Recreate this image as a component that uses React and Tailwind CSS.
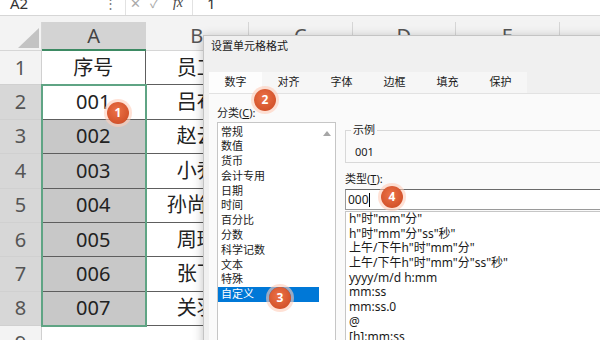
import React from "react";

const rows = [
  ["1", "序号", "员工", false, false],
  ["2", "001", "吕布", true, false],
  ["3", "002", "赵云", true, true],
  ["4", "003", "小乔", true, true],
  ["5", "004", "孙尚香", true, true],
  ["6", "005", "周瑜", true, true],
  ["7", "006", "张飞", true, true],
  ["8", "007", "关羽", true, true],
];

const cats = ["常规", "数值", "货币", "会计专用", "日期", "时间", "百分比", "分数", "科学记数", "文本", "特殊", "自定义"];
const types = [
  'h"时"mm"分"',
  'h"时"mm"分"ss"秒"',
  '上午/下午h"时"mm"分"',
  '上午/下午h"时"mm"分"ss"秒"',
  "yyyy/m/d h:mm",
  "mm:ss",
  "mm:ss.0",
  "@",
  "[h]:mm:ss",
];
const tabs = ["数字", "对齐", "字体", "边框", "填充", "保护"];

function Badge({ n, cls }) {
  return (
    <div
      className={`absolute w-[22px] h-[22px] rounded-full flex items-center justify-center text-white text-[12px] font-bold leading-none bg-[radial-gradient(circle_at_45%_40%,#ec7248,#c9461f)] shadow-[0_0_0_3px_rgba(255,205,185,0.6)] ${cls}`}
    >
      {n}
    </div>
  );
}

export default function App() {
  return (
    <div className="relative w-[600px] h-[340px] overflow-hidden bg-white font-['Noto_Sans','Noto_Sans_CJK_SC',sans-serif] text-[#222]">
      {/* formula bar */}
      <div className="h-[16px] overflow-hidden border-b border-[#d6d6d6] bg-white">
        <div className="-mt-[9px] h-[24px] flex items-center text-[15px] text-[#333] leading-none">
          <span className="ml-[10px] w-[74px]">A2</span>
          <svg width="10" height="6" viewBox="0 0 10 6" className="mt-[-16px]">
            <path d="M1 1 L5 5 L9 1" fill="none" stroke="#666" strokeWidth="1.3" />
          </svg>
          <span className="ml-[10px] text-[13px] text-[#777]">⋮</span>
          <div className="ml-[8px] h-full flex items-center border-l border-r border-[#e2e2e2] w-[68px] pl-[4px] text-[#aaa]">
            <span className="text-[13px]">✕</span>
            <span className="ml-[9px] text-[13px]">✓</span>
            <span className="ml-[14px] text-[14px] italic text-[#444] font-['Liberation_Serif',serif]">fx</span>
          </div>
          <span className="ml-[14px]">1</span>
        </div>
      </div>
      <div className="h-[6px] bg-[#f3f3f3]" />
      {/* column header */}
      <div className="flex h-[29px] bg-[#f3f3f3] text-[20px] text-[#555]">
        <div className="w-[42px] relative border-r border-b border-[#d6d6d6]">
          <svg width="42" height="28" className="absolute left-0 top-0">
            <polygon points="18,26 39,26 39,6" fill="#c3c3c3" />
          </svg>
        </div>
        <div className="w-[103.5px] flex items-center justify-center bg-[#d3d3d3] border-b-2 border-[#3d8a63] text-[#444]">A</div>
        <div className="w-[103.5px] flex items-center justify-center border-r border-b border-[#d6d6d6]">B</div>
        <div className="w-[103.5px] flex items-center justify-center border-r border-b border-[#d6d6d6]">C</div>
        <div className="w-[103.5px] flex items-center justify-center border-r border-b border-[#d6d6d6]">D</div>
        <div className="w-[103.5px] flex items-center justify-center border-r border-b border-[#d6d6d6]">E</div>
        <div className="flex-1 border-b border-[#d6d6d6]" />
      </div>
      {/* rows */}
      {rows.map(([n, a, b, sel, gray]) => (
        <div key={n} className="flex h-[34.4px] text-[20px]">
          <div
            className={`w-[42px] flex items-center justify-center border-b border-r border-[#d0d0d0] text-[#555] ${
              sel ? "bg-[#d7d7d7]" : "bg-[#f3f3f3]"
            }`}
          >
            {n}
          </div>
          <div
            className={`w-[103.5px] flex items-center justify-center border-b border-r border-[#5e5e5e] ${
              gray ? "bg-[#c8c8c8]" : "bg-white"
            }`}
          >
            {a}
          </div>
          <div className="w-[103.5px] flex items-center justify-center border-b border-r border-[#5e5e5e] bg-white whitespace-nowrap">
            {b}
          </div>
          <div className="flex-1 bg-white border-b border-[#e1e1e1]" />
        </div>
      ))}
      <div className="flex h-[34.4px] text-[20px]">
        <div className="w-[42px] flex items-center justify-center border-r border-[#d0d0d0] bg-[#f3f3f3] text-[#555]">9</div>
        <div className="flex-1 bg-white" />
      </div>

      {/* selection border */}
      <div className="absolute left-[41px] top-[84px] w-[105.5px] h-[243px] border-2 border-[#5fa484]" />

      {/* dialog */}
      <div className="absolute left-[203px] top-[35px] w-[410px] h-[320px] bg-[#f0f0f0] border border-[#c4c4c4] shadow-[0_2px_10px_rgba(0,0,0,0.25)] text-[11px] text-[#1a1a1a] font-['Noto_Sans','Noto_Sans_CJK_SC',sans-serif]">
        <div className="h-[36px] pl-[7px] pt-[3px] leading-[14px]">设置单元格格式</div>
        <div className="ml-[5px] flex h-[21px] w-[318px] bg-[#f6f6f6]">
          {tabs.map((t, i) => (
            <div
              key={t}
              className={`w-[53px] flex items-center justify-center ${i === 0 ? "bg-[#fdfdfd]" : ""}`}
            >
              {t}
            </div>
          ))}
        </div>
        <div className="ml-[5px] h-[300px] bg-[#fafafa] border-t border-[#e2e2e2] flex">
          {/* left column */}
          <div className="pl-[8px] pt-[12px]">
            <div className="leading-[14px]">
              分类(<span className="underline">C</span>):
            </div>
            <div className="mt-[2px] w-[119px] h-[230px] bg-white border border-[#c6c6c6] flex">
              <div className="w-[101px] pt-[1.5px]">
                {cats.map((c) => (
                  <div
                    key={c}
                    className={`h-[14.8px] leading-[14.8px] pl-[3px] ${
                      c === "自定义" ? "bg-[#0078d7] text-white" : ""
                    }`}
                  >
                    {c}
                  </div>
                ))}
              </div>
              <div className="w-[16px] flex justify-center pt-[8px]">
                <svg width="8" height="5" viewBox="0 0 8 5">
                  <polygon points="0,5 8,5 4,0" fill="#a6a6a6" />
                </svg>
              </div>
            </div>
          </div>
          {/* right column */}
          <div className="ml-[9px] pt-[36px] w-[270px]">
            <div className="relative h-[33px] border border-[#d8d8d8] pl-[9px] pt-[14px]">
              <span className="absolute -top-[8px] left-[5px] px-[2px] bg-[#fafafa] leading-[14px]">示例</span>
              <div className="leading-[14px]">001</div>
            </div>
            <div className="mt-[9px] leading-[14px]">
              类型(<span className="underline">T</span>):
            </div>
            <div className="mt-[3px] h-[21px] bg-white border border-[#9a9a9a] border-t-[#6a6a6a] flex items-center pl-[2px] text-[12px]">
              <span>000</span>
              <span className="inline-block w-[1px] h-[14px] bg-black" />
            </div>
            <div className="mt-[1px] h-[140px] bg-white border border-[#c6c6c6] text-[12px]">
              {types.map((t) => (
                <div key={t} className="h-[14.7px] leading-[14.7px] pl-[3px] whitespace-nowrap">
                  {t}
                </div>
              ))}
            </div>
          </div>
        </div>
      </div>

      <Badge n="1" cls="left-[107px] top-[102px]" />
      <Badge n="2" cls="left-[254px] top-[89px]" />
      <Badge n="3" cls="left-[269px] top-[287px]" />
      <Badge n="4" cls="left-[381px] top-[186px]" />
    </div>
  );
}
